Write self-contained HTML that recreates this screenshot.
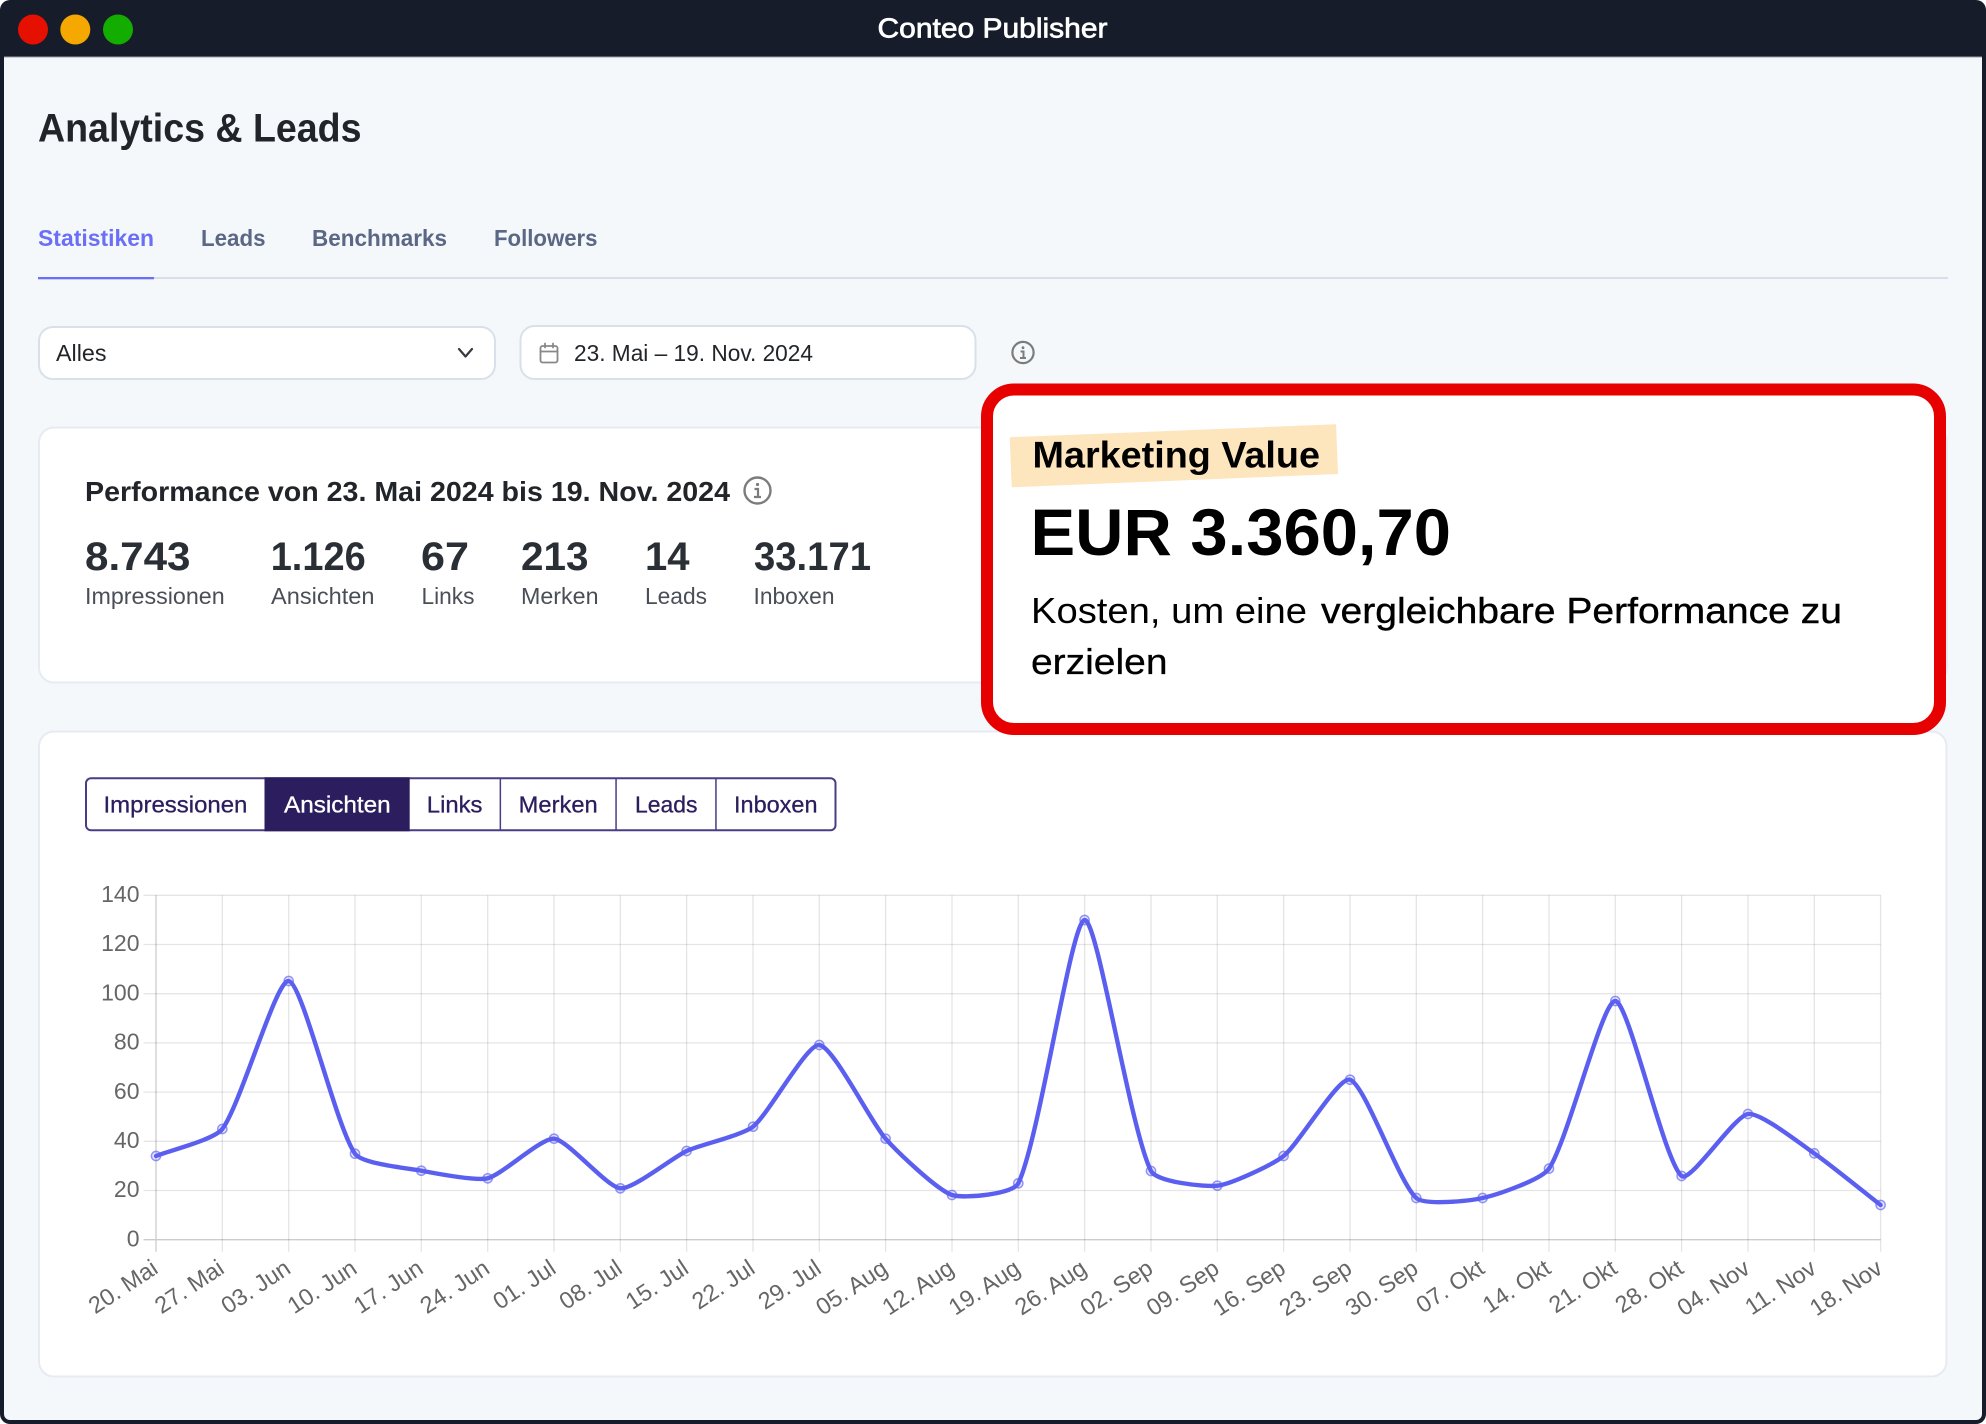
<!DOCTYPE html>
<html lang="de">
<head>
<meta charset="utf-8">
<title>Conteo Publisher</title>
<style>
html,body{margin:0;padding:0;background:#fff;width:1986px;height:1424px;overflow:hidden}
svg{display:block}
text{font-family:"Liberation Sans",Arial,sans-serif}
.b{font-weight:700}
.tab{font-size:23.5px;font-weight:700;fill:#5a6785}
.lab{font-size:23px;fill:#4a4f57}
.num{font-size:39.5px;font-weight:700;fill:#2a2e35}
.btn{font-size:23px;fill:#2c1e5e;stroke:#2c1e5e;stroke-width:.3}
.y{font-size:23px;fill:#666;text-anchor:end}
.x{font-size:23.5px;fill:#666;text-anchor:end}
</style>
</head>
<body>
<svg width="1986" height="1424" viewBox="0 0 1986 1424" xmlns="http://www.w3.org/2000/svg">
<!-- window -->
<rect x="0" y="0" width="1986" height="1424" rx="10" fill="#171c2a"/>
<path d="M4 57H1982V1414a6 6 0 0 1-6 6H10a6 6 0 0 1-6-6Z" fill="#f5f8fb"/>
<rect x="4" y="56.5" width="1978" height="1" fill="#9a9ea6"/>
<circle cx="33" cy="29.5" r="15" fill="#e61000"/>
<circle cx="75.3" cy="29.5" r="15" fill="#f5a800"/>
<circle cx="118" cy="29.5" r="15" fill="#13ad00"/>
<text x="877.5" y="37.5" font-size="28" fill="#fff" stroke="#fff" stroke-width=".7" textLength="230" lengthAdjust="spacingAndGlyphs">Conteo Publisher</text>

<!-- heading -->
<text x="38" y="141.5" font-size="40" class="b" fill="#212529" textLength="323.5" lengthAdjust="spacingAndGlyphs">Analytics &amp; Leads</text>

<!-- tabs -->
<text x="38" y="246" class="tab" style="fill:#6a6ff5" textLength="116" lengthAdjust="spacingAndGlyphs">Statistiken</text>
<text x="201" y="246" class="tab" textLength="64.5" lengthAdjust="spacingAndGlyphs">Leads</text>
<text x="312" y="246" class="tab" textLength="135" lengthAdjust="spacingAndGlyphs">Benchmarks</text>
<text x="494" y="246" class="tab" textLength="103.5" lengthAdjust="spacingAndGlyphs">Followers</text>
<rect x="38" y="277" width="1910" height="2" fill="#d9dfea"/>
<rect x="38" y="277" width="116" height="2.3" fill="#6a6ff5"/>

<!-- select -->
<rect x="39" y="327" width="456" height="52" rx="14" fill="#fff" stroke="#d9e0ea" stroke-width="2"/>
<text x="56" y="361" font-size="23" fill="#212529" textLength="50.5" lengthAdjust="spacingAndGlyphs">Alles</text>
<path d="M459 349l6.5 7.5 6.5-7.5" fill="none" stroke="#343a40" stroke-width="2.2" stroke-linecap="round" stroke-linejoin="round"/>

<!-- date -->
<rect x="520.5" y="326" width="455" height="53" rx="14" fill="#fff" stroke="#d9e0ea" stroke-width="2"/>
<g fill="none" stroke="#888" stroke-width="1.8" stroke-linecap="round">
<rect x="540.5" y="346" width="17" height="16.5" rx="2"/>
<path d="M540.5 351.5h17M545 343.5v4M553 343.5v4"/>
</g>
<text x="574" y="361" font-size="23" fill="#212529" textLength="239" lengthAdjust="spacingAndGlyphs">23. Mai – 19. Nov. 2024</text>

<!-- info 1 -->
<g transform="translate(1023 352.5)" fill="none" stroke="#7c7c7c" stroke-width="2.2">
<circle r="10.6"/>
<path d="M-2.5-1h3v6M-3 5.5h6" stroke-width="2"/>
<circle cy="-4.8" r="1.4" fill="#7c7c7c" stroke="none"/>
</g>

<!-- performance card -->
<rect x="39" y="427.5" width="1908" height="255" rx="15" fill="#fff" stroke="#e6ebf2" stroke-width="2"/>
<text x="85" y="501" font-size="28" class="b" fill="#212529" textLength="645" lengthAdjust="spacingAndGlyphs">Performance von 23. Mai 2024 bis 19. Nov. 2024</text>
<g transform="translate(757.5 490.5)" fill="none" stroke="#7c7c7c" stroke-width="2.4">
<circle r="13"/>
<path d="M-3-1.5h3.5v7.5M-3.5 6.5h7" stroke-width="2.2"/>
<circle cy="-6" r="1.6" fill="#7c7c7c" stroke="none"/>
</g>
<text x="85" y="570" class="num" textLength="105.5" lengthAdjust="spacingAndGlyphs">8.743</text>
<text x="270.7" y="570" class="num" textLength="95" lengthAdjust="spacingAndGlyphs">1.126</text>
<text x="421" y="570" class="num" textLength="48" lengthAdjust="spacingAndGlyphs">67</text>
<text x="521" y="570" class="num" textLength="67.5" lengthAdjust="spacingAndGlyphs">213</text>
<text x="645" y="570" class="num" textLength="44.5" lengthAdjust="spacingAndGlyphs">14</text>
<text x="754" y="570" class="num" textLength="117" lengthAdjust="spacingAndGlyphs">33.171</text>
<text x="85" y="604" class="lab" textLength="139.7" lengthAdjust="spacingAndGlyphs">Impressionen</text>
<text x="271" y="604" class="lab" textLength="103.5" lengthAdjust="spacingAndGlyphs">Ansichten</text>
<text x="421.5" y="604" class="lab" textLength="53" lengthAdjust="spacingAndGlyphs">Links</text>
<text x="521" y="604" class="lab" textLength="77.5" lengthAdjust="spacingAndGlyphs">Merken</text>
<text x="645" y="604" class="lab" textLength="62" lengthAdjust="spacingAndGlyphs">Leads</text>
<text x="753.5" y="604" class="lab" textLength="81" lengthAdjust="spacingAndGlyphs">Inboxen</text>

<!-- chart card -->
<rect x="39" y="731.5" width="1907.5" height="645" rx="15" fill="#fff" stroke="#e6ebf2" stroke-width="2"/>

<!-- button group -->
<rect x="86" y="778.3" width="749.5" height="52" rx="5" fill="#fff" stroke="#4a3c86" stroke-width="2"/>
<rect x="264.5" y="777.3" width="145.2" height="54" fill="#2c1e5e"/>
<rect x="499.6" y="778" width="1.5" height="52" fill="#4a3c86"/>
<rect x="615.3" y="778" width="1.5" height="52" fill="#4a3c86"/>
<rect x="715.2" y="778" width="1.5" height="52" fill="#4a3c86"/>
<text x="103.5" y="812.5" class="btn" textLength="143.9" lengthAdjust="spacingAndGlyphs">Impressionen</text>
<text x="284" y="812.5" class="btn" style="fill:#fff;stroke:#fff" textLength="106.7" lengthAdjust="spacingAndGlyphs">Ansichten</text>
<text x="426.8" y="812.5" class="btn" textLength="55.7" lengthAdjust="spacingAndGlyphs">Links</text>
<text x="518.7" y="812.5" class="btn" textLength="79" lengthAdjust="spacingAndGlyphs">Merken</text>
<text x="635" y="812.5" class="btn" textLength="62.5" lengthAdjust="spacingAndGlyphs">Leads</text>
<text x="734" y="812.5" class="btn" textLength="83.5" lengthAdjust="spacingAndGlyphs">Inboxen</text>

<!-- grid -->
<g stroke="#000" stroke-opacity=".1" stroke-width="1.3" fill="none">
<path d="M143.5 895.3H1880.6M143.5 944.5H1880.6M143.5 993.7H1880.6M143.5 1042.9H1880.6M143.5 1092.1H1880.6M143.5 1141.3H1880.6M143.5 1190.5H1880.6"/>
<path d="M222.3 895.3V1251.7M288.7 895.3V1251.7M355 895.3V1251.7M421.3 895.3V1251.7M487.7 895.3V1251.7M554 895.3V1251.7M620.3 895.3V1251.7M686.6 895.3V1251.7M753 895.3V1251.7M819.3 895.3V1251.7M885.6 895.3V1251.7M952 895.3V1251.7M1018.3 895.3V1251.7M1084.6 895.3V1251.7M1151 895.3V1251.7M1217.3 895.3V1251.7M1283.6 895.3V1251.7M1350 895.3V1251.7M1416.3 895.3V1251.7M1482.6 895.3V1251.7M1549 895.3V1251.7M1615.3 895.3V1251.7M1681.6 895.3V1251.7M1748 895.3V1251.7M1814.3 895.3V1251.7M1880.6 895.3V1251.7"/>
</g>
<g stroke="#000" stroke-opacity=".2" stroke-width="1.3" fill="none">
<path d="M156 895.3V1251.7M143.5 1239.7H1880.6"/>
</g>

<!-- y labels -->
<text class="y" x="139.5" y="902">140</text>
<text class="y" x="139.5" y="951.2">120</text>
<text class="y" x="139.5" y="1000.4">100</text>
<text class="y" x="139.5" y="1049.6">80</text>
<text class="y" x="139.5" y="1098.8">60</text>
<text class="y" x="139.5" y="1148">40</text>
<text class="y" x="139.5" y="1197.2">20</text>
<text class="y" x="139.5" y="1246.4">0</text>

<!-- x labels -->
<g>
<text class="x" transform="translate(159.5 1272) rotate(-33.5)">20. Mai</text>
<text class="x" transform="translate(225.8 1272) rotate(-33.5)">27. Mai</text>
<text class="x" transform="translate(292.2 1272) rotate(-33.5)">03. Jun</text>
<text class="x" transform="translate(358.5 1272) rotate(-33.5)">10. Jun</text>
<text class="x" transform="translate(424.8 1272) rotate(-33.5)">17. Jun</text>
<text class="x" transform="translate(491.2 1272) rotate(-33.5)">24. Jun</text>
<text class="x" transform="translate(557.5 1272) rotate(-33.5)">01. Jul</text>
<text class="x" transform="translate(623.8 1272) rotate(-33.5)">08. Jul</text>
<text class="x" transform="translate(690.1 1272) rotate(-33.5)">15. Jul</text>
<text class="x" transform="translate(756.5 1272) rotate(-33.5)">22. Jul</text>
<text class="x" transform="translate(822.8 1272) rotate(-33.5)">29. Jul</text>
<text class="x" transform="translate(889.1 1272) rotate(-33.5)">05. Aug</text>
<text class="x" transform="translate(955.5 1272) rotate(-33.5)">12. Aug</text>
<text class="x" transform="translate(1021.8 1272) rotate(-33.5)">19. Aug</text>
<text class="x" transform="translate(1088.1 1272) rotate(-33.5)">26. Aug</text>
<text class="x" transform="translate(1154.5 1272) rotate(-33.5)">02. Sep</text>
<text class="x" transform="translate(1220.8 1272) rotate(-33.5)">09. Sep</text>
<text class="x" transform="translate(1287.1 1272) rotate(-33.5)">16. Sep</text>
<text class="x" transform="translate(1353.5 1272) rotate(-33.5)">23. Sep</text>
<text class="x" transform="translate(1419.8 1272) rotate(-33.5)">30. Sep</text>
<text class="x" transform="translate(1486.1 1272) rotate(-33.5)">07. Okt</text>
<text class="x" transform="translate(1552.5 1272) rotate(-33.5)">14. Okt</text>
<text class="x" transform="translate(1618.8 1272) rotate(-33.5)">21. Okt</text>
<text class="x" transform="translate(1685.1 1272) rotate(-33.5)">28. Okt</text>
<text class="x" transform="translate(1751.5 1272) rotate(-33.5)">04. Nov</text>
<text class="x" transform="translate(1817.8 1272) rotate(-33.5)">11. Nov</text>
<text class="x" transform="translate(1884.1 1272) rotate(-33.5)">18. Nov</text>
</g>

<!-- line -->
<path fill="none" stroke="#5b5ff0" stroke-width="4.4" stroke-linejoin="round" stroke-linecap="round" d="M156 1156C169.3 1150.6 214.2 1139.7 222.3 1129C240.7 1104.7 276.3 978.7 288.7 981C302.85 983.65 335.65 1126 355 1153.7C362.15 1163.95 407.85 1168.2 421.3 1170.7C434.4 1173.15 475.4 1181.25 487.7 1178.3C501.95 1174.85 541.2 1137.75 554 1138.7C567.7 1139.75 606.5 1187 620.3 1188.3C633 1189.5 672.85 1157.4 686.6 1151C699.35 1145.05 742.35 1135.2 753 1126.7C768.9 1114 806.6 1043.85 819.3 1045C833.15 1046.25 870.5 1121.65 885.6 1138.7C897.05 1151.65 937.05 1189.95 952 1195C963.6 1198.9 1013 1194.25 1018.3 1183.3C1039.55 1139.25 1071.05 921.25 1084.6 920C1097.55 918.8 1129.95 1128.85 1151 1171C1156.5 1182 1204.5 1187.15 1217.3 1185.7C1231 1184.15 1272.5 1164.85 1283.6 1156C1299.05 1143.65 1338.65 1076.1 1350 1079.7C1365.2 1084.5 1398.5 1182.1 1416.3 1198C1425 1205.75 1469.95 1200.8 1482.6 1198C1496.45 1194.95 1541.4 1179.9 1549 1168.6C1567.9 1140.5 1602.3 1000.25 1615.3 1001C1628.8 1001.75 1663.75 1160.8 1681.6 1176C1690.25 1183.4 1733.65 1116.45 1748 1114C1760.2 1111.9 1801.6 1144.7 1814.3 1153.4C1828.15 1162.9 1867.35 1194.7 1880.6 1205"/>

<!-- points -->
<g fill="#6366f1" fill-opacity=".15" stroke="#5b5ff0" stroke-opacity=".65" stroke-width="1.5">
<circle cx="156" cy="1156" r="4.6"/><circle cx="222.3" cy="1129" r="4.6"/><circle cx="288.7" cy="981" r="4.6"/><circle cx="355" cy="1153.7" r="4.6"/><circle cx="421.3" cy="1170.7" r="4.6"/><circle cx="487.7" cy="1178.3" r="4.6"/><circle cx="554" cy="1138.7" r="4.6"/><circle cx="620.3" cy="1188.3" r="4.6"/><circle cx="686.6" cy="1151" r="4.6"/><circle cx="753" cy="1126.7" r="4.6"/><circle cx="819.3" cy="1045" r="4.6"/><circle cx="885.6" cy="1138.7" r="4.6"/><circle cx="952" cy="1195" r="4.6"/><circle cx="1018.3" cy="1183.3" r="4.6"/><circle cx="1084.6" cy="920" r="4.6"/><circle cx="1151" cy="1171" r="4.6"/><circle cx="1217.3" cy="1185.7" r="4.6"/><circle cx="1283.6" cy="1156" r="4.6"/><circle cx="1350" cy="1079.7" r="4.6"/><circle cx="1416.3" cy="1198" r="4.6"/><circle cx="1482.6" cy="1198" r="4.6"/><circle cx="1549" cy="1168.6" r="4.6"/><circle cx="1615.3" cy="1001" r="4.6"/><circle cx="1681.6" cy="1176" r="4.6"/><circle cx="1748" cy="1114" r="4.6"/><circle cx="1814.3" cy="1153.4" r="4.6"/><circle cx="1880.6" cy="1205" r="4.6"/>
</g>

<!-- red callout -->
<rect x="987" y="389.5" width="953" height="339.5" rx="27" fill="#fff" stroke="#e60000" stroke-width="12"/>
<polygon points="1009.7,437.3 1336,424.3 1338,474 1011.7,487.3" fill="#fde5bd"/>
<text x="1032.5" y="467.5" font-size="37.5" class="b" fill="#000" textLength="287.5" lengthAdjust="spacingAndGlyphs">Marketing Value</text>
<text x="1030.5" y="555" font-size="66" class="b" fill="#000" textLength="420.5" lengthAdjust="spacingAndGlyphs">EUR 3.360,70</text>
<text x="1031" y="623" font-size="36" fill="#000" textLength="276" lengthAdjust="spacingAndGlyphs">Kosten, um eine</text>
<text x="1321" y="623" font-size="36" fill="#000" stroke="#000" stroke-width=".4" textLength="521" lengthAdjust="spacingAndGlyphs">vergleichbare Performance zu</text>
<text x="1031" y="674" font-size="36" fill="#000" stroke="#000" stroke-width=".3" textLength="136.5" lengthAdjust="spacingAndGlyphs">erzielen</text>
</svg>
</body>
</html>
